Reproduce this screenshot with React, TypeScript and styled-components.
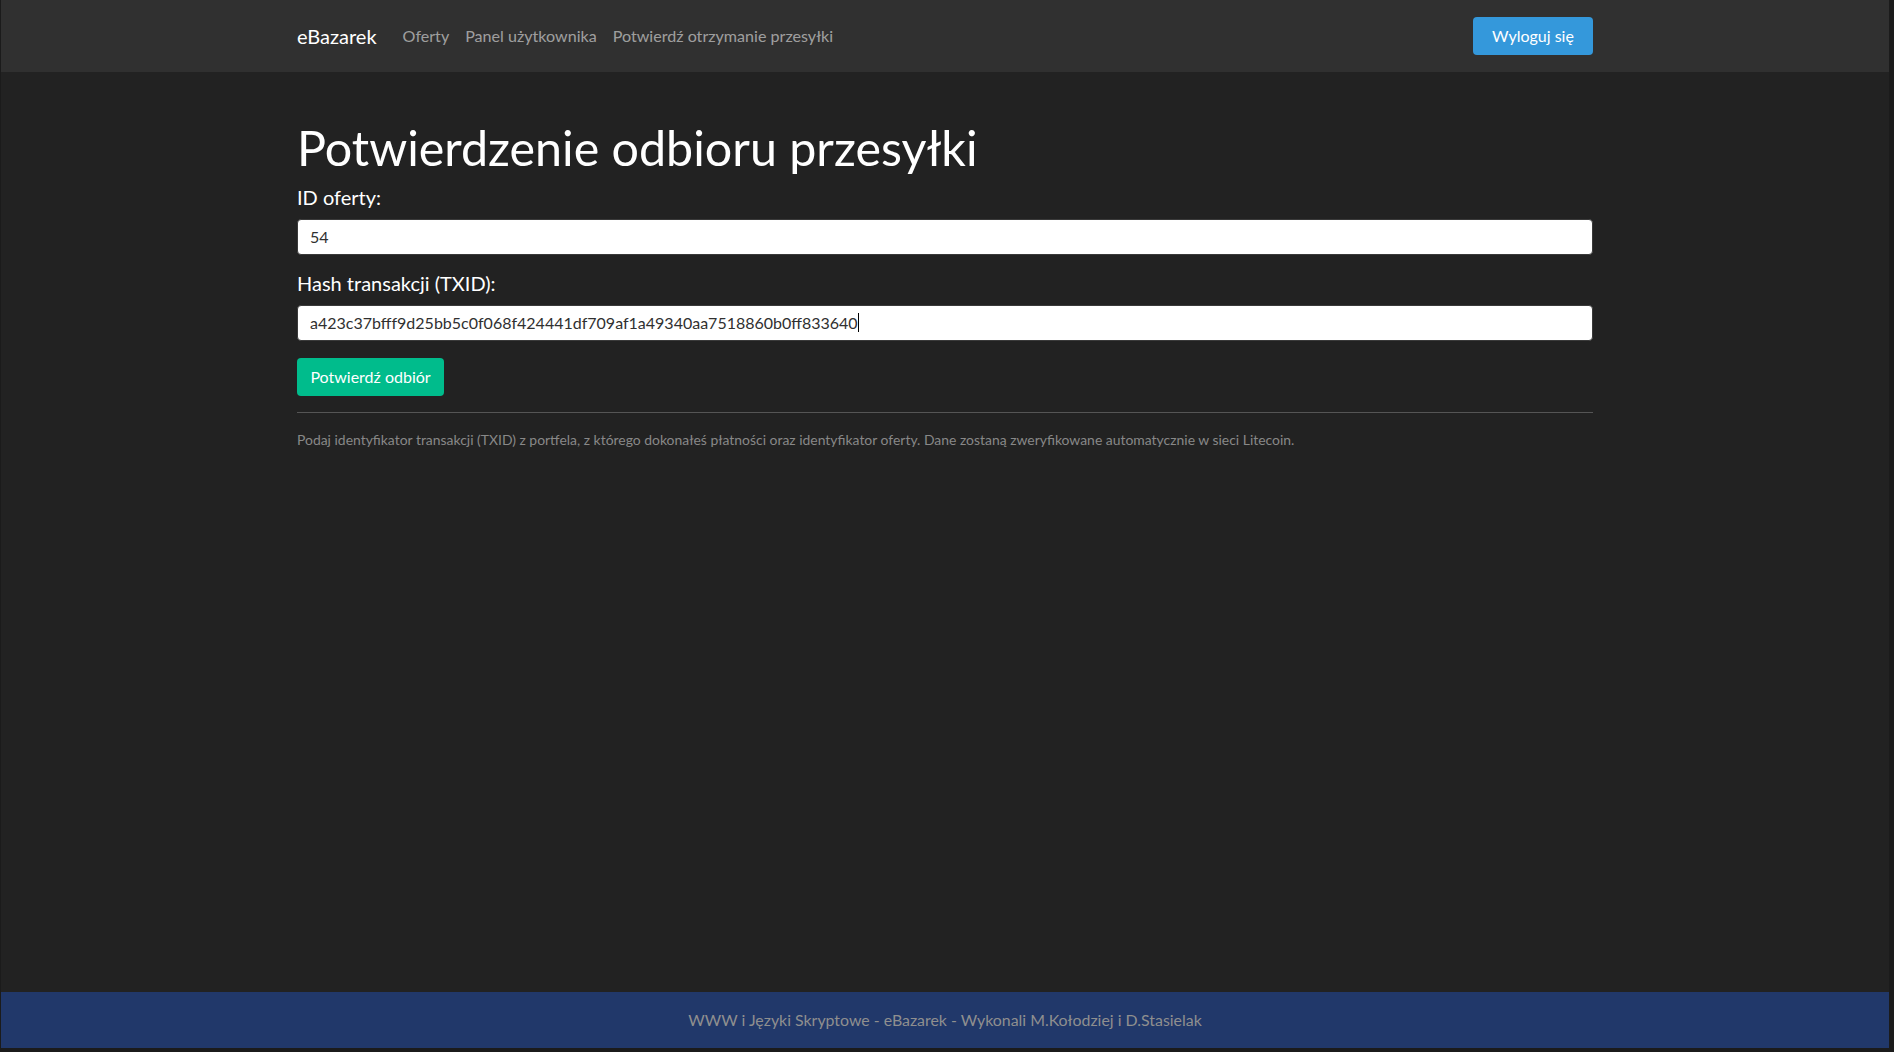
import React from "react";
import styled, { createGlobalStyle } from "styled-components";

const GlobalStyle = createGlobalStyle`
  * { box-sizing: border-box; }
  html, body { margin: 0; padding: 0; background: #1b1b1b; }
  body { font-family: Lato, "Open Sans", "Liberation Sans", sans-serif; color: #fff; }
`;

const Frame = styled.div`
  min-height: 100vh;
  padding: 0 5px 4px 1px;
  background: #1b1b1b;
  display: flex;
`;

const Page = styled.div`
  flex: 1;
  display: flex;
  flex-direction: column;
  background: #222222;
`;

const NavBar = styled.nav`
  height: 72px;
  background: #303030;
  display: flex;
  align-items: center;
`;

const Container = styled.div`
  width: 1296px;
  margin: 0 auto;
`;

const NavInner = styled(Container)`
  display: flex;
  align-items: center;
`;

const Brand = styled.a`
  font-size: 20px;
  color: #fff;
  text-decoration: none;
  margin-right: 18px;
  line-height: 30px;
`;

const NavLinks = styled.div`
  display: flex;
  align-items: center;
  flex: 1;
`;

const NavLink = styled.a`
  font-size: 16.1px;
  color: rgba(255, 255, 255, 0.55);
  text-decoration: none;
  padding: 8px 8px;
  line-height: 24px;
`;

const Button = styled.button<{ $variant: "info" | "success" }>`
  font-family: inherit;
  font-size: 16px;
  line-height: 24px;
  color: #fff;
  border: none;
  border-radius: 4px;
  padding: 7px 12px;
  height: 38px;
  cursor: pointer;
  background: ${(p) => (p.$variant === "info" ? "#3498db" : "#00bc8c")};
  ${(p) => (p.$variant === "info" ? "width: 120px;" : "width: 147px;")}
`;

const Main = styled.main`
  flex: 1;
  padding-top: 46px;
`;

const Title = styled.h1`
  font-size: 48.4px;
  font-weight: 400;
  line-height: 1.2;
  margin: 0 0 6px;
`;

const Field = styled.div`
  display: flex;
  flex-direction: column;
  margin-bottom: 13px;
`;

const Label = styled.label`
  font-size: 20px;
  line-height: 30px;
  margin-bottom: 7px;
`;

const InputWrap = styled.div`
  position: relative;
`;

const Input = styled.input`
  display: block;
  height: 36px;
  width: 100%;
  font-family: inherit;
  font-size: 16px;
  line-height: 24px;
  color: #303030;
  background: #fff;
  border: 1px solid #3a3a3a;
  border-radius: 4px;
  padding: 4px 12px 6px;
  &:focus { outline: none; box-shadow: none; }
`;

const CaretLayer = styled.div`
  position: absolute;
  inset: 0;
  padding: 5px 13px 7px;
  font-size: 16px;
  line-height: 24px;
  pointer-events: none;
  white-space: pre;
  display: flex;
  align-items: center;
`;

const Ghost = styled.span`
  color: transparent;
`;

const Caret = styled.span`
  display: inline-block;
  width: 1px;
  height: 19px;
  background: #000;
`;

const Actions = styled.div`
  padding-top: 4px;
  padding-bottom: 16px;
  border-bottom: 1px solid #555;
`;

const Help = styled.p`
  margin: 16px 0 0;
  font-size: 13.93px;
  line-height: 21px;
  color: #888;
`;

const Footer = styled.footer`
  height: 56px;
  padding-bottom: 2px;
  background: #21386a;
  display: flex;
  align-items: center;
  justify-content: center;
  font-size: 15.9px;
  color: #8f8f8f;
`;

const TXID = "a423c37bfff9d25bb5c0f068f424441df709af1a49340aa7518860b0ff833640";

export default function App() {
  return (
    <>
      <GlobalStyle />
      <Frame>
        <Page>
          <NavBar>
            <NavInner>
              <Brand href="#">eBazarek</Brand>
              <NavLinks>
                <NavLink href="#">Oferty</NavLink>
                <NavLink href="#">Panel użytkownika</NavLink>
                <NavLink href="#">Potwierdź otrzymanie przesyłki</NavLink>
              </NavLinks>
              <Button $variant="info">Wyloguj się</Button>
            </NavInner>
          </NavBar>
          <Main>
            <Container>
              <Title>Potwierdzenie odbioru przesyłki</Title>
              <Field>
                <Label htmlFor="offer">ID oferty:</Label>
                <Input id="offer" defaultValue="54" />
              </Field>
              <Field>
                <Label htmlFor="txid">Hash transakcji (TXID):</Label>
                <InputWrap>
                  <Input id="txid" defaultValue={TXID} />
                  <CaretLayer aria-hidden="true">
                    <Ghost>{TXID}</Ghost>
                    <Caret />
                  </CaretLayer>
                </InputWrap>
              </Field>
              <Actions>
                <Button $variant="success">Potwierdź odbiór</Button>
              </Actions>
              <Help>
                Podaj identyfikator transakcji (TXID) z portfela, z którego dokonałeś płatności oraz identyfikator oferty. Dane zostaną zweryfikowane automatycznie w sieci Litecoin.
              </Help>
            </Container>
          </Main>
          <Footer>WWW i Języki Skryptowe - eBazarek - Wykonali M.Kołodziej i D.Stasielak</Footer>
        </Page>
      </Frame>
    </>
  );
}
